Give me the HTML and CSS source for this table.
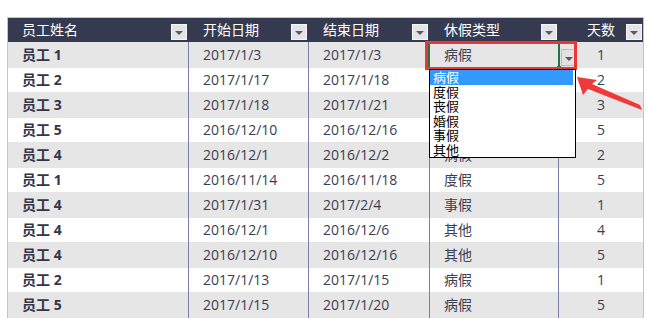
FILE: index.html
```html
<!DOCTYPE html>
<html lang="zh-CN">
<head>
<meta charset="utf-8">
<title>休假记录</title>
<link rel="stylesheet" href="styles.css">
</head>
<body>
<div class="page">
  <div class="sheet">
    <div class="row head">
      <div class="cell"><span class="label">员工姓名</span><span class="filter"></span></div>
      <div class="cell"><span class="label">开始日期</span><span class="filter"></span></div>
      <div class="cell"><span class="label">结束日期</span><span class="filter"></span></div>
      <div class="cell"><span class="label">休假类型</span><span class="filter"></span></div>
      <div class="cell center"><span class="label">天数</span><span class="filter"></span></div>
    </div>
    <div class="row"><div class="cell name">员工 1</div><div class="cell">2017/1/3</div><div class="cell">2017/1/3</div><div class="cell">病假</div><div class="cell center">1</div></div>
    <div class="row"><div class="cell name">员工 2</div><div class="cell">2017/1/17</div><div class="cell">2017/1/18</div><div class="cell">度假</div><div class="cell center">2</div></div>
    <div class="row"><div class="cell name">员工 3</div><div class="cell">2017/1/18</div><div class="cell">2017/1/21</div><div class="cell">丧假</div><div class="cell center">3</div></div>
    <div class="row"><div class="cell name">员工 5</div><div class="cell">2016/12/10</div><div class="cell">2016/12/16</div><div class="cell">婚假</div><div class="cell center">5</div></div>
    <div class="row"><div class="cell name">员工 4</div><div class="cell">2016/12/1</div><div class="cell">2016/12/2</div><div class="cell">病假</div><div class="cell center">2</div></div>
    <div class="row"><div class="cell name">员工 1</div><div class="cell">2016/11/14</div><div class="cell">2016/11/18</div><div class="cell">度假</div><div class="cell center">5</div></div>
    <div class="row"><div class="cell name">员工 4</div><div class="cell">2017/1/31</div><div class="cell">2017/2/4</div><div class="cell">事假</div><div class="cell center">1</div></div>
    <div class="row"><div class="cell name">员工 4</div><div class="cell">2016/12/1</div><div class="cell">2016/12/6</div><div class="cell">其他</div><div class="cell center">4</div></div>
    <div class="row"><div class="cell name">员工 4</div><div class="cell">2016/12/10</div><div class="cell">2016/12/16</div><div class="cell">其他</div><div class="cell center">5</div></div>
    <div class="row"><div class="cell name">员工 2</div><div class="cell">2017/1/13</div><div class="cell">2017/1/15</div><div class="cell">病假</div><div class="cell center">1</div></div>
    <div class="row"><div class="cell name">员工 5</div><div class="cell">2017/1/15</div><div class="cell">2017/1/20</div><div class="cell">病假</div><div class="cell center">5</div></div>
  </div>

  <div class="active-cell"><span class="cell-drop"></span><span class="handle"></span></div>
  <div class="highlight"></div>
  <ul class="droplist">
    <li class="selected">病假</li>
    <li>度假</li>
    <li>丧假</li>
    <li>婚假</li>
    <li>事假</li>
    <li>其他</li>
  </ul>
  <svg class="arrow" width="646" height="318" viewBox="0 0 646 318">
    <polygon points="577,77 597,80 592,84 640,105 642,110 588,89 583,95" fill="#ef3a3a"/>
  </svg>
</div>
</body>
</html>
```
FILE: styles.css
```css
html, body {
  margin: 0;
  padding: 0;
  background: #ffffff;
}
body {
  font-family: "Open Sans", "Noto Sans CJK SC", sans-serif;
  font-size: 14px;
  color: #3b3e52;
}
.page {
  position: relative;
  width: 646px;
  height: 318px;
  overflow: hidden;
  padding-top: 17px;
  padding-left: 7px;
  box-sizing: border-box;
}
.sheet {
  width: 637px;
  border: 1px solid #c4c4c4;
  border-bottom: none;
  box-sizing: border-box;
}
.row {
  display: grid;
  grid-template-columns: 180px 120px 121px 129px 85px;
  height: 24px;
  background: #ffffff;
}
.row:nth-child(even) {
  height: 26px;
  background: #e6e6e6;
}
.cell {
  display: flex;
  align-items: center;
  padding-left: 14px;
  border-left: 1px solid #7a7ea8;
  white-space: nowrap;
  line-height: 1;
}
.cell:first-child {
  border-left: none;
}
.cell.center {
  justify-content: center;
  padding-left: 0;
}
.name {
  font-weight: bold;
  color: #33364a;
}
.head {
  height: 24px;
  background: #363a50;
  color: #ffffff;
}
.head .cell {
  border-left-color: #363a50;
  position: relative;
  padding-right: 18px;
}
.head .cell.center {
  padding-left: 0;
  padding-right: 0;
}
.filter {
  position: absolute;
  right: 1px;
  bottom: 2px;
  width: 14px;
  height: 14px;
  background: #e4e4e8;
  border: 1px solid #f7f7f7;
  display: flex;
  align-items: center;
  justify-content: center;
}
.filter::after,
.cell-drop::after {
  content: "";
  display: block;
  width: 0;
  height: 0;
  border-left: 4px solid transparent;
  border-right: 4px solid transparent;
  border-top: 4px solid #5a5a5a;
  margin-top: 2px;
}
.active-cell {
  position: absolute;
  left: 428px;
  top: 42px;
  width: 128px;
  height: 25px;
  border-left: 2px solid #217346;
  border-right: 2px solid #217346;
  border-bottom: 1px solid #217346;
}
.cell-drop {
  position: absolute;
  left: 131px;
  top: 7px;
  width: 13px;
  height: 15px;
  background: #e2e2e2;
  border: 1px solid #bdbdbd;
  display: flex;
  align-items: center;
  justify-content: center;
}
.handle {
  position: absolute;
  right: -3px;
  bottom: -3px;
  width: 4px;
  height: 4px;
  background: #217346;
}
.highlight {
  position: absolute;
  left: 425px;
  top: 41px;
  width: 152px;
  height: 29px;
  border: 3px solid #ef3434;
  box-sizing: border-box;
}
.droplist {
  position: absolute;
  left: 429px;
  top: 69px;
  width: 147px;
  margin: 0;
  padding: 0 2px 0 0;
  list-style: none;
  background: #ffffff;
  border: 1px solid #000000;
  box-sizing: border-box;
  font-family: "Noto Sans CJK SC", sans-serif;
  font-size: 13px;
  color: #000000;
}
.droplist li {
  height: 14.5px;
  line-height: 14.5px;
  padding-left: 3px;
}
.droplist li.selected {
  background: #3399ff;
  color: #ffffff;
}
.arrow {
  position: absolute;
  left: 0;
  top: 0;
  pointer-events: none;
}
```
